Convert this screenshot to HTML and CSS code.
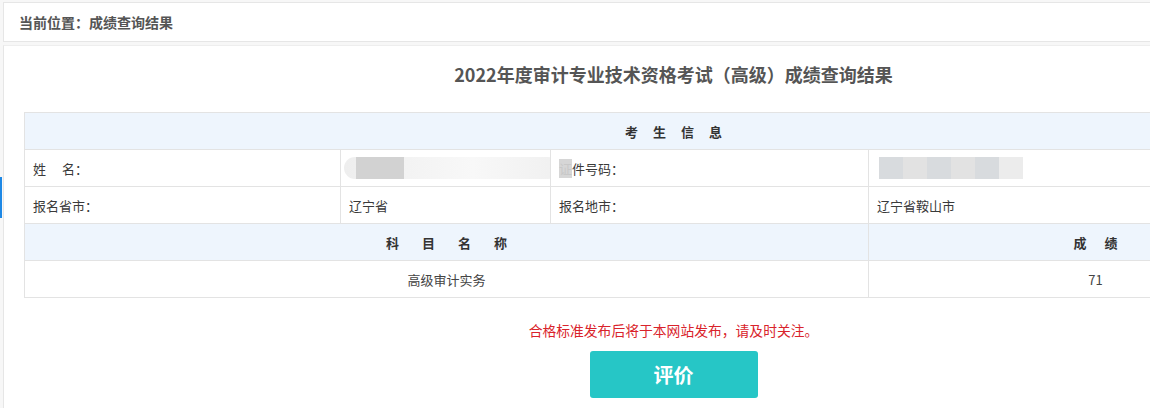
FILE: index.html
```html
<!DOCTYPE html>
<html lang="zh-CN">
<head>
    <meta charset="UTF-8">
    <title>成绩查询结果</title>
    <link rel="stylesheet" href="styles.css">
</head>
<body>
    <div class="side-mark"></div>
    <div class="crumb">当前位置：成绩查询结果</div>
    <div class="main">
        <h3 class="title">2022年度审计专业技术资格考试（高级）成绩查询结果</h3>
        <table class="score-table">
            <colgroup>
                <col style="width:316px">
                <col style="width:210px">
                <col style="width:318px">
                <col style="width:454px">
            </colgroup>
            <tr class="head">
                <th colspan="4"><span class="sp-info">考生信息</span></th>
            </tr>
            <tr>
                <td>姓<span class="gap"></span>名：</td>
                <td>
                    <div class="blur blur-name">
                        <span class="b1"></span><span class="b2"></span><span class="b3"></span>
                    </div>
                </td>
                <td><span class="mask">证</span>件号码：</td>
                <td>
                    <div class="blur blur-id">
                        <span></span><span></span><span></span><span></span><span></span><span></span>
                    </div>
                </td>
            </tr>
            <tr>
                <td>报名省市：</td>
                <td>辽宁省</td>
                <td>报名地市：</td>
                <td>辽宁省鞍山市</td>
            </tr>
            <tr class="head">
                <th colspan="3"><span class="sp-subject">科目名称</span></th>
                <th><span class="sp-score">成绩</span></th>
            </tr>
            <tr>
                <td colspan="3" class="center">高级审计实务</td>
                <td class="center">71</td>
            </tr>
        </table>
        <p class="notice">合格标准发布后将于本网站发布，请及时关注。</p>
        <div class="btn-row">
            <button class="btn-rate">评价</button>
        </div>
    </div>
</body>
</html>
```

FILE: styles.css
```css
html {
    overflow: hidden;
}
body {
    margin: 0;
    width: 1343px;
    background-color: #f7f7f7;
    font-family: "Microsoft YaHei", "Noto Sans CJK SC", "Liberation Sans", sans-serif;
    color: #333;
    position: relative;
}
.side-mark {
    position: absolute;
    left: 0;
    top: 177px;
    width: 2px;
    height: 41px;
    background-color: #1e88e5;
}
.crumb {
    margin: 2px 0 0 3px;
    height: 38px;
    line-height: 38px;
    padding-left: 15px;
    background-color: #fff;
    border: 1px solid #e6e6e6;
    font-size: 14px;
    font-weight: bold;
    color: #555;
}
.main {
    margin: 3px 0 0 3px;
    padding: 18px 0 20px 20px;
    background-color: #fff;
    border-left: 1px solid #e6e6e6;
    border-top: 1px solid #eeeeee;
}
.title {
    margin: 0 0 28px -20px;
    height: 20px;
    line-height: 20px;
    text-align: center;
    font-size: 18px;
    font-weight: bold;
    color: #555;
}
.score-table {
    width: 1298px;
    border-collapse: collapse;
    table-layout: fixed;
    font-size: 13px;
}
.score-table th,
.score-table td {
    height: 36px;
    padding: 0 8px;
    border: 1px solid #e3e3e3;
    text-align: left;
    font-weight: normal;
    white-space: nowrap;
    overflow: hidden;
    color: #3a3a3a;
}
.score-table .head th {
    background-color: #eef5fd;
    text-align: center;
    font-weight: bold;
    color: #333;
}
.score-table .center {
    text-align: center;
    color: #444;
}
.sp-info {
    letter-spacing: 15px;
    padding-left: 15px;
}
.sp-subject {
    letter-spacing: 23px;
    padding-left: 23px;
}
.sp-score {
    letter-spacing: 18px;
    padding-left: 18px;
}
.gap {
    display: inline-block;
    width: 16px;
}
.mask {
    background-color: #d6d6d6;
    color: #c8c8c8;
}
.blur {
    display: flex;
    height: 22px;
    filter: blur(0.6px);
}
.blur-name {
    width: 215px;
    margin-left: -5px;
    border-radius: 11px;
    background: linear-gradient(to right, #eeeeee, #f8f8f8 60%, #f0f0f0);
}
.blur-name .b1 {
    width: 12px;
}
.blur-name .b2 {
    width: 48px;
    background-color: #d2d2d2;
}
.blur-name .b3 {
    flex: 1;
}
.blur-id {
    margin-left: 2px;
}
.blur-id span {
    width: 24px;
    background-color: #d8dbde;
}
.blur-id span:nth-child(2n) {
    background-color: #e2e2e2;
}
.blur-id span:last-child {
    background-color: #ececec;
}
.notice {
    margin: 24px 0 0 -20px;
    text-align: center;
    font-size: 13.8px;
    line-height: 16px;
    color: #d9232b;
}
.btn-row {
    margin: 13px 0 0 -20px;
    text-align: center;
}
.btn-rate {
    width: 168px;
    height: 47px;
    border: 0;
    border-radius: 3px;
    background-color: #26c6c6;
    color: #fff;
    font-family: "Microsoft YaHei", "Noto Sans CJK SC", sans-serif;
    font-size: 20px;
    font-weight: bold;
    cursor: pointer;
}
```
